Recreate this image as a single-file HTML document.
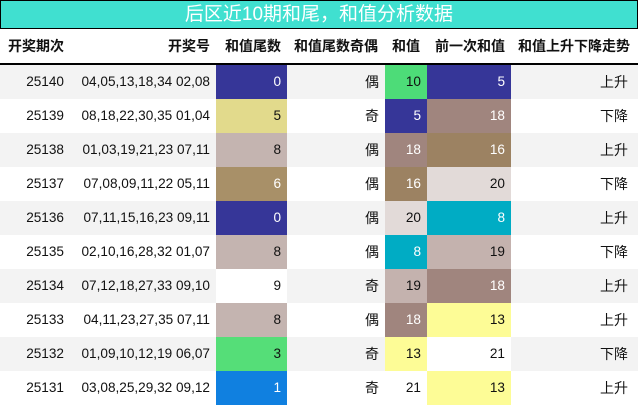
<!DOCTYPE html>
<html><head><meta charset="utf-8"><style>
*{margin:0;padding:0;box-sizing:border-box}
body{width:638px;height:406px;background:#fff;position:relative;overflow:hidden;font-family:"Liberation Sans","Noto Sans CJK SC",sans-serif;font-size:14px;color:#111}
.t{position:absolute;left:0;top:0;width:638px;height:29px;background:#40e0d0;border:1px solid #000;color:#fff;font-size:19px;text-align:center;line-height:27px;white-space:nowrap}
.h{position:absolute;top:29px;height:34px;line-height:34px;font-weight:bold;font-size:14px;white-space:nowrap}
.hl{position:absolute;left:0;top:63px;width:638px;height:2px;background:#000}
.r{position:absolute;left:0;width:638px;height:34px}
.r.g{background:#f3f3f3}
.c{position:absolute;top:0;height:34px;line-height:34px;text-align:right;padding-right:6px;white-space:nowrap}
.n{font-size:13.6px}
.w{color:#fff}
</style></head><body>
<div class="t">后区近10期和尾，和值分析数据</div>
<div class="h" style="left:8px">开奖期次</div>
<div class="h" style="left:168px">开奖号</div>
<div class="h" style="left:225px">和值尾数</div>
<div class="h" style="left:294px">和值尾数奇偶</div>
<div class="h" style="left:392px">和值</div>
<div class="h" style="left:435px">前一次和值</div>
<div class="h" style="left:518px">和值上升下降走势</div>
<div class="hl"></div>
<div id="rows"></div>
<script>
var d=[
["25140","04,05,13,18,34 02,08","0","#363698",1,"偶","10","#4ddc78",0,"5","#363698",1,"上升"],
["25139","08,18,22,30,35 01,04","5","#e2da8c",0,"奇","5","#363698",1,"18","#a0857e",1,"下降"],
["25138","01,03,19,21,23 07,11","8","#c4b4b0",0,"偶","18","#a0857e",1,"16","#9c8262",1,"上升"],
["25137","07,08,09,11,22 05,11","6","#a89068",1,"偶","16","#9c8262",1,"20","#e2dad8",0,"下降"],
["25136","07,11,15,16,23 09,11","0","#363698",1,"偶","20","#e2dad8",0,"8","#00acc4",1,"上升"],
["25135","02,10,16,28,32 01,07","8","#c4b4b0",0,"偶","8","#00acc4",1,"19","#c4b2ae",0,"下降"],
["25134","07,12,18,27,33 09,10","9","#ffffff",0,"奇","19","#c4b2ae",0,"18","#a0857e",1,"上升"],
["25133","04,11,23,27,35 07,11","8","#c4b4b0",0,"偶","18","#a0857e",1,"13","#fdfc96",0,"上升"],
["25132","01,09,10,12,19 06,07","3","#55de78",0,"奇","13","#fdfc96",0,"21","#ffffff",0,"下降"],
["25131","03,08,25,29,32 09,12","1","#1080e0",1,"奇","21","",0,"13","#fdfc96",0,"上升"]];
var h="";
d.forEach(function(x,i){
h+='<div class="r'+(i%2==0?' g':'')+'" style="top:'+(65+34*i)+'px">'+
'<div class="c n" style="left:0;width:70px">'+x[0]+'</div>'+
'<div class="c n" style="left:60px;width:156px">'+x[1]+'</div>'+
'<div class="c n'+(x[4]?' w':'')+'" style="left:216px;width:71px;background:'+x[3]+'">'+x[2]+'</div>'+
'<div class="c" style="left:287px;width:98px">'+x[5]+'</div>'+
'<div class="c n'+(x[8]?' w':'')+'" style="left:385px;width:42px;background:'+(x[7]||'transparent')+'">'+x[6]+'</div>'+
'<div class="c n'+(x[11]?' w':'')+'" style="left:427px;width:84px;background:'+x[10]+'">'+x[9]+'</div>'+
'<div class="c" style="left:511px;width:127px;padding-right:10px">'+x[12]+'</div></div>';
});
document.getElementById("rows").innerHTML=h;
</script>
</body></html>
